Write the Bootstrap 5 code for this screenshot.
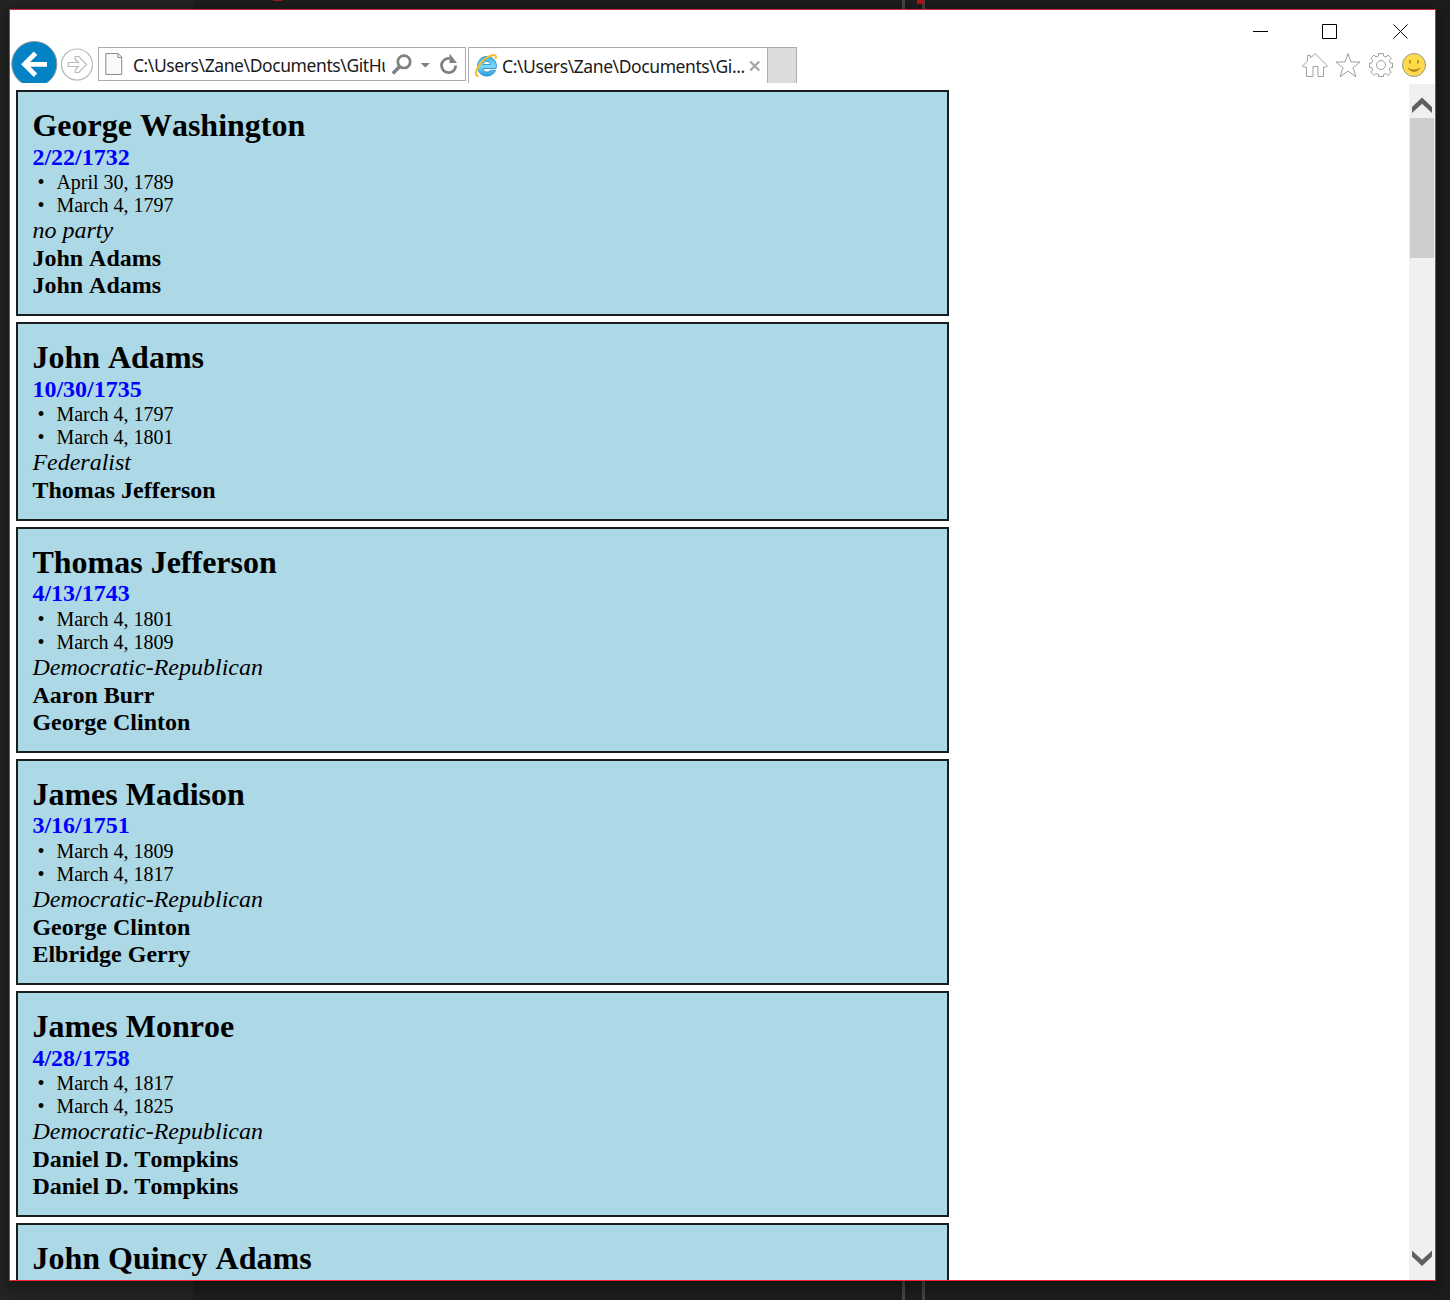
<!DOCTYPE html>
<html lang="en">
<head>
<meta charset="utf-8">
<title>Presidents</title>
<link href="https://cdn.jsdelivr.net/npm/bootstrap@5.3.0/dist/css/bootstrap.min.css" rel="stylesheet">
<style>
  body { width: 1450px; height: 1300px; background: linear-gradient(90deg, #242424 193px, #1d1d1d 193px); }
  .desktop { height: 1300px; padding: 9px 14px 19px 9px; }
  .guide { top: 0; width: 3px; height: 1300px; background: #454545; }
  .guide-a { left: 902px; }
  .guide-b { left: 922px; }
  .spot { background: #b51212; top: 0; }
  .spot-a { left: 917px; width: 6px; height: 4px; }
  .spot-b { left: 273px; width: 9px; height: 1px; }
  .win { border: 1px solid #d22f3c; border-bottom-color: #f02432; background: #fff; box-shadow: 0 4px 14px 3px rgba(0,0,0,.35); overflow: hidden; }
  .captionbar { height: 37px; padding: 13px 25px 0 0; gap: 52px; }
  .captionbar svg { width: 18px; height: 18px; }
  .toolbar { height: 37px; }
  .back { width: 47px; height: 43px; margin: -7px 0 0 1px; }
  .fwd { width: 34px; height: 34px; margin: 1px 0 0 3px; }
  .ui { font-family: "Noto Sans", "Open Sans", sans-serif; font-size: 17.5px; line-height: 34px; color: #1a1a1a; white-space: nowrap; letter-spacing: -.41px; }
  .addr { width: 368px; height: 34px; margin-left: 3px; border: 1px solid #acacac; padding-left: 6px; }
  .addr .path { width: 253px; margin-left: 9px; overflow: hidden; }
  .tab-on { width: 299px; height: 36px; margin-left: 2px; border: 1px solid #acacac; border-width: 1px 0 0 1px; padding-left: 6px; line-height: 37px; }
  .tab-on .path { width: 246px; margin-left: 4px; }
  .tab-new { width: 30px; height: 36px; border: 1px solid #acacac; border-bottom: 0; background: #dcdcdc; }
  .tools { padding: 5px 8px 0 0; gap: 7px; }
  .view { height: 1196px; overflow: hidden; }
  .doc { padding: 6px 0 0 6px; }
  .pres { width: 933px; height: 226px; margin-bottom: 6.1px; padding: 14.9px 14.4px 0; border: 2px solid #191d1f; background: #add8e6; color: #000; font: 24px/1.15 "Liberation Serif", serif; font-kerning: none; }
  .pres.short { height: 198.5px; }
  .pres h1 { font-size: 32px; font-weight: 700; line-height: 1.15; margin: 0; }
  .pres .born { color: #00f; font-weight: 700; }
  .pres ul { font-size: 20px; list-style: none; margin: 0; padding: 0; }
  .pres li { padding-left: 24px; position: relative; }
  .pres li::before { content: "•"; position: absolute; left: 5px; }
  .sbar { width: 26px; background: #f0f0f0; }
  .sbar .thumb { width: 24px; height: 140px; background: #cdcdcd; }
  .sbar .arrow { width: 26px; height: 34px; }
</style>
<script src="https://cdn.jsdelivr.net/npm/bootstrap@5.3.0/dist/js/bootstrap.bundle.min.js"></script>
</head>
<body class="overflow-hidden position-relative">
<div class="guide guide-a position-absolute"></div>
<div class="guide guide-b position-absolute"></div>
<div class="spot spot-a position-absolute"></div>
<div class="spot spot-b position-absolute"></div>
<div class="desktop position-relative">
  <div class="win h-100 d-flex flex-column">
    <div class="captionbar d-flex justify-content-end flex-shrink-0">
      <svg viewBox="0 0 18 18"><path d="M1 8.500H16" stroke="#000" fill="none"/></svg>
      <svg viewBox="0 0 18 18"><path d="M.5 1.500h14v14h-14z" stroke="#000" fill="none"/></svg>
      <svg viewBox="0 0 18 18"><path d="M1.500 1.500l14 14M15.500 1.500l-14 14" stroke="#000" fill="none"/></svg>
    </div>
    <div class="toolbar d-flex align-items-start flex-shrink-0">
      <svg class="back flex-shrink-0" viewBox="0 0 47 43"><circle cx="23.300" cy="24" r="22.600" fill="#0383c5" stroke="#9b9b9b"/><path d="M36 24.300H13.500M24.500 13.300l-11 11 11 11" fill="none" stroke="#fff" stroke-width="4.800"/></svg>
      <svg class="fwd flex-shrink-0" viewBox="0 0 34 34"><g fill="none" stroke="#b9b9b9" stroke-width="1.200"><circle cx="16" cy="16.500" r="15.500"/><path d="M7.300 14.500h10l-3-3.300V8.500h3.500l7.700 8-7.700 8h-3.500v-2.700l3-3.300h-10z"/></g></svg>
      <div class="addr ui d-flex flex-shrink-0">
        <svg width="19" height="32" viewBox="0 0 19 32"><path d="M.8 5.500h12.500l3.500 3.500v17.500H.8z" fill="#f8fafb" stroke="#8a8a8a"/><path d="M13 5.500V9.500h4" fill="none" stroke="#8a8a8a"/></svg>
        <div class="path">C:\Users\Zane\Documents\GitHu</div>
        <svg width="76" height="32" viewBox="0 0 76 32" class="ms-1 flex-shrink-0"><g fill="none" stroke="#808080"><circle cx="15" cy="13.800" r="6.200" stroke-width="2.700"/><path d="M10.700 18.500L3.800 25.500" stroke-width="3.400"/><path d="M60.500 10.500A7.100 7.100 0 1 0 66.700 17.500" stroke-width="2.800"/></g><path d="M31.500 15h9.500l-4.700 4.500z" fill="#808080"/><path d="M60.500 5.500v9.500h7.500z" fill="#808080"/></svg>
      </div>
      <div class="tab-on ui d-flex flex-shrink-0">
        <svg class="flex-shrink-0" width="23" height="36" viewBox="0 0 23 36"><defs><linearGradient id="eblue" x2="0" y2="1"><stop stop-color="#3aaee8"/><stop offset=".5" stop-color="#7bdcf8"/><stop offset="1" stop-color="#249ddd"/></linearGradient></defs><path fill-rule="evenodd" d="M11.500 8.500a9.500 9.500 0 0 1 9.600 12H8c.3 4 5.600 4.600 7.300 1.800h5.300C17.500 30.500 3 30.500 2.500 18.500 2.500 12.500 6.500 8.500 11.500 8.500zM8 16.600h7.500c-.4-4.300-7-4.300-7.500 0z" fill="url(#eblue)" stroke="#2385c4" stroke-width=".8"/><path d="M3.500 28C-2.500 28.500 3 15.500 11.500 10 17 6.300 22.500 5.500 20.500 11" fill="none" stroke="#f8bd24" stroke-width="2"/></svg>
        <div class="path">C:\Users\Zane\Documents\Gi...</div>
        <svg class="flex-shrink-0" width="14" height="36" viewBox="0 0 14 36"><path d="M2.200 13.500l9 9M11.200 13.500l-9 9" stroke="#a6a6a6" stroke-width="2.400"/></svg>
      </div>
      <div class="tab-new flex-shrink-0"></div>
      <div class="tools d-flex ms-auto flex-shrink-0">
        <svg width="26" height="26" viewBox="0 0 26 26" fill="#fff" stroke="#a0a0a0"><path d="M.5 14L5.500 9V3.500h3V6L13 1.500 25.500 14l-1 1h-3v9.500h-5.500v-10h-5v10H4.500V15h-3z" stroke-linejoin="round"/></svg>
        <svg width="26" height="26" viewBox="0 0 26 26" fill="#fff" stroke="#a0a0a0"><path d="M13 1.500l3 8.500h9l-7 5.700 3 9-8-5.500-8 5.500 3-9L1 10h9z" stroke-linejoin="round"/></svg>
        <svg width="26" height="26" viewBox="0 0 26 26" fill="none" stroke="#a0a0a0" stroke-linejoin="round"><path d="M10.500 4V1.500h5V4l2.500 1 2-2 3.300 3.300-2 2 1 2.700h2.200v4.500h-2.200l-1 2.500 2 2-3.300 3.500-2-2-2.500 1v2h-5v-2L8 21.500l-2 2L2.700 20l2-2-1-2.500H1.500V11h2.200l1-2.700-2-2L6 3l2 2z"/><circle cx="13" cy="13" r="4.500"/></svg>
        <svg width="26" height="26" viewBox="0 0 26 26"><circle cx="13" cy="13" r="11.500" fill="#fed94a" stroke="#979797"/><path d="M9 8v3.500M17 8v3.500" stroke="#a5811e" stroke-width="1.500"/><path d="M7 16c2.500 4.500 9.500 4.500 12 0-3 2.600-9 2.600-12 0z" fill="#a5811e" stroke="#a5811e" stroke-width=".7"/></svg>
      </div>
    </div>
    <div class="view d-flex flex-grow-1">
      <main class="doc flex-grow-1">
        <section class="pres"><h1>George Washington</h1><div class="born">2/22/1732</div><ul><li>April 30, 1789</li><li>March 4, 1797</li></ul><div class="fst-italic">no party</div><div class="fw-bold">John Adams</div><div class="fw-bold">John Adams</div></section>
        <section class="pres short"><h1>John Adams</h1><div class="born">10/30/1735</div><ul><li>March 4, 1797</li><li>March 4, 1801</li></ul><div class="fst-italic">Federalist</div><div class="fw-bold">Thomas Jefferson</div></section>
        <section class="pres"><h1>Thomas Jefferson</h1><div class="born">4/13/1743</div><ul><li>March 4, 1801</li><li>March 4, 1809</li></ul><div class="fst-italic">Democratic-Republican</div><div class="fw-bold">Aaron Burr</div><div class="fw-bold">George Clinton</div></section>
        <section class="pres"><h1>James Madison</h1><div class="born">3/16/1751</div><ul><li>March 4, 1809</li><li>March 4, 1817</li></ul><div class="fst-italic">Democratic-Republican</div><div class="fw-bold">George Clinton</div><div class="fw-bold">Elbridge Gerry</div></section>
        <section class="pres"><h1>James Monroe</h1><div class="born">4/28/1758</div><ul><li>March 4, 1817</li><li>March 4, 1825</li></ul><div class="fst-italic">Democratic-Republican</div><div class="fw-bold">Daniel D. Tompkins</div><div class="fw-bold">Daniel D. Tompkins</div></section>
        <section class="pres"><h1>John Quincy Adams</h1></section>
      </main>
      <aside class="sbar d-flex flex-column flex-shrink-0">
        <svg class="arrow flex-shrink-0" viewBox="0 0 26 34"><path d="M3 23L13 13.500l10 9.500v6L13 19.800 3 29z" fill="#606060"/></svg>
        <div class="thumb flex-shrink-0 mx-auto"></div>
        <svg class="arrow flex-shrink-0 mt-auto" viewBox="0 0 26 34"><path d="M3 4.500l10 9.300 10-9.300v6L13 20 3 10.500z" fill="#606060"/></svg>
      </aside>
    </div>
  </div>
</div>
</body>
</html>
